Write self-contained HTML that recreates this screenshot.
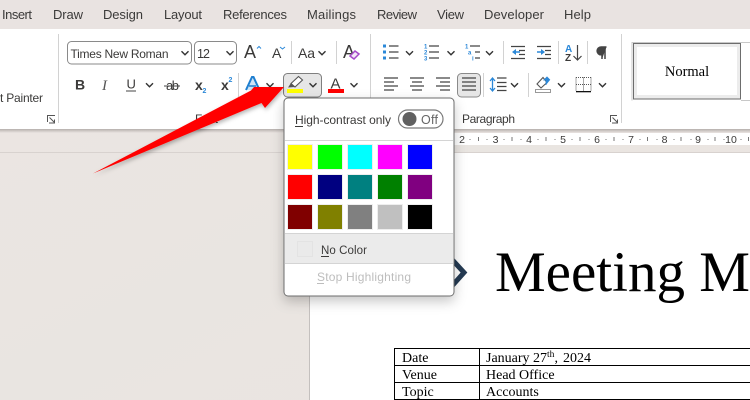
<!DOCTYPE html>
<html><head><meta charset="utf-8"><style>
html,body{margin:0;padding:0;background:#ebe5e2}
svg{display:block}
text{font-family:"Liberation Sans",sans-serif;fill:#3b3a39}
.s{font-family:"Liberation Serif",serif;fill:#000}
.sep{stroke:#d2d2d2;stroke-width:1;fill:none}
.chev{fill:none;stroke:#333;stroke-width:1.400}
.ln{stroke:#444;stroke-width:1.200;fill:none}
.bl{fill:#2b88d8}
</style></head><body>
<svg xmlns="http://www.w3.org/2000/svg" width="750" height="400" viewBox="0 0 750 400">
<defs>
<linearGradient id="shade" x1="0" y1="0" x2="0" y2="1"><stop offset="0" stop-color="#b5afac"/><stop offset="1" stop-color="#ebe5e2"/></linearGradient>
<linearGradient id="bg" x1="0" y1="0" x2="1" y2="1"><stop offset="0" stop-color="#ece5e2"/><stop offset=".5" stop-color="#e9e5e1"/><stop offset="1" stop-color="#ece4e1"/></linearGradient>
<filter id="pop" x="-20%" y="-20%" width="140%" height="140%"><feDropShadow dx="0" dy="5" stdDeviation="6" flood-color="#000" flood-opacity=".22"/></filter>
<filter id="ar" x="-10%" y="-20%" width="120%" height="140%"><feDropShadow dx="1" dy="2" stdDeviation="2" flood-color="#000" flood-opacity=".3"/></filter>
<path id="c" d="M-3.500,-1.700 L0,1.800 L3.500,-1.700" class="chev"/>
</defs>
<rect width="750" height="400" fill="url(#bg)"/>
<rect width="750" height="29" fill="#e9e3e1"/>
<g font-size="13">
<text x="2" y="19" textLength="30">Insert</text>
<text x="53" y="19" textLength="30">Draw</text>
<text x="103" y="19" textLength="40">Design</text>
<text x="164" y="19" textLength="38">Layout</text>
<text x="223" y="19" textLength="64">References</text>
<text x="307" y="19" textLength="49">Mailings</text>
<text x="377" y="19" textLength="40">Review</text>
<text x="437" y="19" textLength="27">View</text>
<text x="484" y="19" textLength="60">Developer</text>
<text x="564" y="19" textLength="27">Help</text>
</g>
<rect x="0" y="29" width="750" height="100" fill="#fff"/>
<rect x="0" y="129" width="750" height="4" fill="url(#shade)"/>
<!-- ruler -->
<rect x="310" y="133" width="440" height="12" fill="#fff"/>
<rect x="0" y="152" width="750" height="1" fill="#d8d2cf"/>
<rect x="310" y="153" width="440" height="247" fill="#fff"/>
<rect x="309" y="153" width="1" height="247" fill="#c4c0be"/>
<g font-size="10.500" fill="#555" text-anchor="middle">
<text x="462" y="143">2</text><text x="495.500" y="143">3</text><text x="529" y="143">4</text><text x="563" y="143">5</text><text x="597" y="143">6</text><text x="631" y="143">7</text><text x="664.500" y="143">8</text><text x="698" y="143">9</text><text x="731" y="143">10</text>
</g>
<path stroke="#777" stroke-width="1" fill="none" d="M478.500,137v4M512,137v4M546,137v4M580,137v4M614,137v4M647.500,137v4M681,137v4M715,137v4M748.500,137v4"/>
<path stroke="#777" stroke-width="1" fill="none" d="M470,139v1M487,139v1M504,139v1M521,139v1M538,139v1M555,139v1M572,139v1M589,139v1M606,139v1M623,139v1M640,139v1M657,139v1M674,139v1M691,139v1M708,139v1M724,139v1M741,139v1"/>
<!-- separators -->
<path class="sep" d="M58.500,34V123M370.500,34V123M621.500,34V123M291.500,41V64M336.500,41V64M238.500,73V97M503.500,41V64M558.500,41V64M587.500,41V64M483.500,73V97M528.500,73V97"/>
<!-- font boxes -->
<rect x="67.500" y="41.500" width="124" height="22.500" rx="4" fill="#fff" stroke="#8a8a8a"/>
<rect x="194.500" y="41.500" width="42" height="22.500" rx="4" fill="#fff" stroke="#8a8a8a"/>
<text x="70.500" y="58" font-size="12" textLength="98">Times New Roman</text>
<text x="197" y="58" font-size="12.500" textLength="13">12</text>
<use href="#c" x="185" y="53"/><use href="#c" x="230" y="53"/>
<text x="244" y="58" font-size="18" textLength="13">A</text>
<path d="M257,48.500l2,-2l2,2" fill="none" stroke="#2b88d8" stroke-width="1"/>
<text x="272" y="58" font-size="14" textLength="10">A</text>
<path d="M280,47l2.500,2l2.500,-2" fill="none" stroke="#2b88d8" stroke-width="1"/>
<text x="298" y="58" font-size="14" textLength="17">Aa</text>
<use href="#c" x="322" y="53"/>
<text x="343" y="58" font-size="18" textLength="12">A</text>
<path d="M350,56l5,-5l4,3l-5,5z" fill="#f3e6f6" stroke="#a64ac9" stroke-width="1.500"/>
<!-- row 2 font -->
<text x="75" y="89.500" font-size="14" font-weight="bold" textLength="9">B</text>
<text x="102" y="90" class="s" font-size="15" font-style="italic" style="fill:#555">I</text>
<text x="126.500" y="88.500" font-size="13" textLength="9">U</text>
<rect x="126" y="90.500" width="10" height="1" fill="#444"/>
<use href="#c" x="149.500" y="85"/>
<text x="166" y="90" font-size="13" textLength="13">ab</text>
<rect x="164" y="85.500" width="16" height="1" fill="#444"/>
<text x="195" y="90" font-size="14" font-weight="bold" textLength="8">x</text>
<text x="202.500" y="93" font-size="7" font-weight="bold" style="fill:#2b88d8">2</text>
<text x="221" y="90" font-size="14" font-weight="bold" textLength="8">x</text>
<text x="228.500" y="82" font-size="7" font-weight="bold" style="fill:#2b88d8">2</text>
<path d="M246,90l6,-13h1.500l6,13" fill="#cfe4f7" stroke="#1f7fd0" stroke-width="2"/>
<path d="M249,86h7" stroke="#1f7fd0" stroke-width="1.500"/>
<use href="#c" x="270" y="85"/>
<!-- highlight button -->
<rect x="283.500" y="73.500" width="38" height="23.500" rx="4" fill="#e6e6e6" stroke="#7f7f7f"/>
<path d="M291,83.500L298.500,76.500L302.500,80L295,87z" fill="#fff" stroke="#555" stroke-width="1.100"/>
<path d="M288,87.500L291,83L295,87z" fill="#555"/>
<rect x="287" y="89" width="16" height="4" fill="#ffff00"/>
<use href="#c" x="313" y="85"/>
<text x="330.500" y="88.500" font-size="15" textLength="13">A</text>
<rect x="328" y="89" width="16" height="4" fill="#f00"/>
<use href="#c" x="354" y="85"/>
<text x="0" y="102" font-size="12" textLength="43">t Painter</text>
<path d="M47.500,122V115.500H55M49.500,117.500l5,5M54.500,119.500v3.500h-3.500M49,123H55" fill="none" stroke="#555" stroke-width="1"/>
<text x="195" y="123" font-size="12" textLength="23">Font</text>
<text x="462" y="123" font-size="12" textLength="53">Paragraph</text>
<path d="M610.500,122V115.500H617M612.500,117.500l5,5M617.500,119.500v3.500h-3.500M612,123H617" fill="none" stroke="#555" stroke-width="1"/>
<!-- lists -->
<path class="bl" d="M383,44.500h3v3h-3zM383,50.500h3v3h-3zM383,56.500h3v3h-3z"/>
<path class="ln" d="M389,46h9.500M389,52h9.500M389,58h9.500"/>
<use href="#c" x="409.500" y="53"/>
<g font-size="6" font-weight="bold"><text x="424" y="48.500" style="fill:#2b88d8">1</text><text x="424" y="54.500" style="fill:#2b88d8">2</text><text x="424" y="60.500" style="fill:#2b88d8">3</text></g>
<path class="ln" d="M429,46h10M429,52h10M429,58h10"/>
<use href="#c" x="451" y="53"/>
<g font-size="6" font-weight="bold"><text x="465" y="48.500" style="fill:#2b88d8">1</text><text x="468" y="54.500" style="fill:#2b88d8">a</text><text x="472" y="60.500" style="fill:#2b88d8">i</text></g>
<path class="ln" d="M470,46h10M475,52h5M475,58h5"/>
<use href="#c" x="489.500" y="53"/>
<!-- indents -->
<path class="ln" d="M511,46.500h14M519,50.500h6M519,54.500h6M511,58.500h14"/>
<path d="M516,49l-4,3l4,3zM516,51.300h4v1.400h-4z" fill="#2b88d8"/>
<path class="ln" d="M537,46.500h14M545,50.500h6M545,54.500h6M537,58.500h14"/>
<path d="M541,49l4,3l-4,3zM537,51.300h4v1.400h-4z" fill="#2b88d8"/>
<!-- sort -->
<text x="565" y="52" font-size="10" font-weight="bold" style="fill:#2b88d8">A</text>
<text x="565" y="61" font-size="10" font-weight="bold">Z</text>
<path d="M577.500,45V60M573.500,56l4,4l4,-4" fill="none" stroke="#444" stroke-width="1.200"/>
<!-- pilcrow -->
<path d="M606.500,47H601a3.900,3.900 0 0 0 0,7.800h1V59M605,47V59" fill="#444" stroke="#444" stroke-width="1.500"/>
<!-- align -->
<path class="ln" d="M384,78h14M384,82h10M384,86h14M384,90h10"/>
<path class="ln" d="M410,78h14M412,82h10M410,86h14M412,90h10"/>
<path class="ln" d="M436,78h14M440,82h10M436,86h14M440,90h10"/>
<rect x="457.500" y="73.500" width="23" height="23.500" rx="4" fill="#e6e6e6" stroke="#8a8a8a"/>
<path class="ln" d="M462,78h14M462,82h14M462,86h14M462,90h14"/>
<path d="M492.500,79V90M490,81l2.500,-3l2.500,3M490,88l2.500,3l2.500,-3" fill="none" stroke="#2b88d8" stroke-width="1.300"/>
<path class="ln" d="M497,78h9.500M497,82.500h9.500M497,86.500h9.500M497,90.500h9.500"/>
<use href="#c" x="514.500" y="85"/>
<!-- shading -->
<path d="M537,84l6,-6.500l4,5l-6,5.500z" fill="#fff" stroke="#555" stroke-width="1.100"/>
<path d="M546,85v-5l-2,0l3,-3l3,3" fill="#2b88d8" stroke="#2b88d8" stroke-width=".8"/>
<rect x="535.500" y="89.500" width="15" height="3" fill="#fff" stroke="#999"/>
<use href="#c" x="561.500" y="85"/>
<!-- borders -->
<path d="M576,77.500h15M576,77.500v14M591,77.500v14M583.500,77.500v14M576,84.500h15" stroke="#555" stroke-width="1" stroke-dasharray="1 1" fill="none"/>
<rect x="576" y="91" width="15" height="1.300" fill="#111"/>
<use href="#c" x="602.500" y="85"/>
<!-- style gallery -->
<path d="M632,100.500V42.500H750M741,100.500H750" fill="none" stroke="#c8c8c8"/>
<rect x="633.500" y="43.500" width="107" height="55.500" fill="#ececec" stroke="#6d6d6d"/>
<rect x="637" y="47" width="100" height="48" fill="#fff"/>
<text x="687" y="76" class="s" font-size="14.500" text-anchor="middle">Normal</text>
<!-- document -->
<path d="M452,259.500L464,272.500L452,286" fill="none" stroke="#243a52" stroke-width="5"/>
<text x="495" y="291" class="s" font-size="57">Meeting M</text>
<rect x="394.500" y="348.500" width="400" height="51" fill="none" stroke="#000"/>
<path d="M479.500,348V400M394,365.500H750M394,382.500H750" stroke="#000" fill="none"/>
<g font-size="14" class="s">
<text x="402" y="362" class="s">Date</text><text x="402" y="379" class="s">Venue</text><text x="402" y="396" class="s">Topic</text>
<text x="486" y="362" class="s">January 27<tspan font-size="9.500" dy="-5">th</tspan><tspan dy="5">,</tspan><tspan x="563">2024</tspan></text>
<text x="486" y="379" class="s">Head Office</text><text x="486" y="396" class="s">Accounts</text>
</g>
<!-- arrow -->
<polygon points="93,173.500 251,90.500 254,87 284,87 265,108 261.500,103" fill="#ff0000" filter="url(#ar)"/>
<!-- popup -->
<rect x="284" y="98" width="170" height="198" rx="4" fill="#fff" stroke="#6e6e6e" filter="url(#pop)"/>
<text x="295" y="124" font-size="12" textLength="96">High-contrast only</text>
<rect x="295" y="126" width="8" height="1" fill="#3b3a39"/>
<rect x="398.500" y="110" width="44.500" height="18" rx="9" fill="#fff" stroke="#7a7a7a" stroke-width="1.200"/>
<circle cx="409.500" cy="119" r="7" fill="#606060"/>
<text x="421" y="124" font-size="12.500" textLength="17" style="fill:#666">Off</text>
<rect x="285" y="140" width="168" height="1" fill="#d4d4d4"/>
<g stroke="#eeeeee" stroke-width="1">
<rect x="287.500" y="144.500" width="25" height="25" fill="#ffff00"/><rect x="317.500" y="144.500" width="25" height="25" fill="#00ff00"/><rect x="347.500" y="144.500" width="25" height="25" fill="#00ffff"/><rect x="377.500" y="144.500" width="25" height="25" fill="#ff00ff"/><rect x="407.500" y="144.500" width="25" height="25" fill="#0000ff"/>
<rect x="287.500" y="174.500" width="25" height="25" fill="#ff0000"/><rect x="317.500" y="174.500" width="25" height="25" fill="#000080"/><rect x="347.500" y="174.500" width="25" height="25" fill="#008080"/><rect x="377.500" y="174.500" width="25" height="25" fill="#008000"/><rect x="407.500" y="174.500" width="25" height="25" fill="#800080"/>
<rect x="287.500" y="204.500" width="25" height="25" fill="#800000"/><rect x="317.500" y="204.500" width="25" height="25" fill="#808000"/><rect x="347.500" y="204.500" width="25" height="25" fill="#808080"/><rect x="377.500" y="204.500" width="25" height="25" fill="#c0c0c0"/><rect x="407.500" y="204.500" width="25" height="25" fill="#000000"/>
</g>
<rect x="285" y="233" width="168" height="1" fill="#d4d4d4"/>
<rect x="285" y="234" width="168" height="29" fill="#ebebeb"/>
<rect x="285" y="263" width="168" height="1" fill="#d4d4d4"/>
<rect x="297.500" y="241.500" width="15" height="15" fill="#eaeaea" stroke="#e3e3e3"/>
<text x="321" y="254" font-size="11.500" textLength="46">No Color</text>
<rect x="321" y="256" width="8" height="1" fill="#3b3a39"/>
<text x="317" y="281" font-size="12" textLength="94" style="fill:#bdbdbd">Stop Highlighting</text>
<rect x="317" y="283" width="7" height="1" fill="#bdbdbd"/>
</svg>
</body></html>
